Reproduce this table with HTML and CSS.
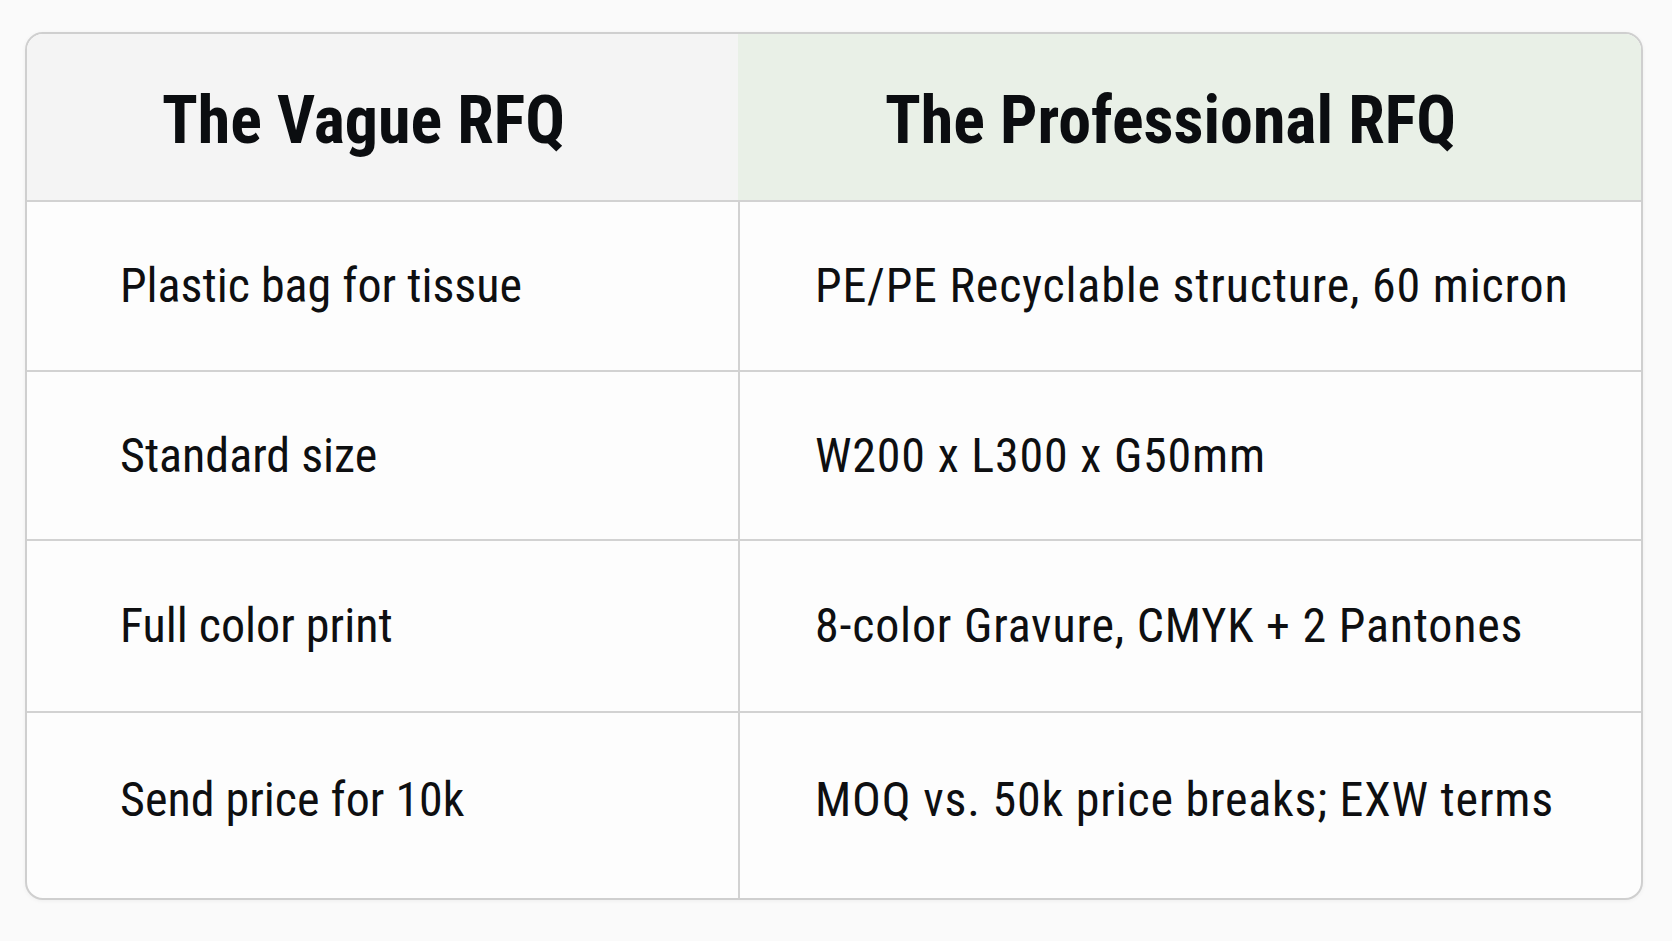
FILE: index.html
```html
<!DOCTYPE html>
<html lang="en">
<head>
<meta charset="utf-8">
<title>RFQ comparison</title>
<link rel="stylesheet" href="styles.css">
</head>
<body>
<div class="table">
  <div class="cell head head-vague">The Vague RFQ</div>
  <div class="cell head head-pro">The Professional RFQ</div>

  <div class="cell vague">Plastic bag for tissue</div>
  <div class="cell pro">PE/PE Recyclable structure, 60 micron</div>

  <div class="cell vague">Standard size</div>
  <div class="cell pro">W200 x L300 x G50mm</div>

  <div class="cell vague">Full color print</div>
  <div class="cell pro">8-color Gravure, CMYK + 2 Pantones</div>

  <div class="cell vague last">Send price for 10k</div>
  <div class="cell pro last">MOQ vs. 50k price breaks; EXW terms</div>
</div>
</body>
</html>
```
FILE: styles.css
```css
* { box-sizing: border-box; }

html, body { height: 100%; }

body {
  margin: 0;
  background: #fafafa;
  font-family: "Roboto Condensed", Roboto, "Liberation Sans", sans-serif;
  color: #0e0f11;
  padding: 32px 29px 41px 25px;
}

.table {
  height: 100%;
  display: grid;
  grid-template-columns: 711px 1fr;
  grid-template-rows: 168px 170px 169px 172px 1fr;
  border: 2px solid #cfcfcf;
  border-radius: 18px;
  overflow: hidden;
  background: #fdfdfd;
  box-shadow: 0 1px 4px rgba(0, 0, 0, 0.05);
}

.cell {
  display: flex;
  align-items: center;
  border-bottom: 2px solid #d2d2d2;
  line-height: 1;
  white-space: nowrap;
}

.cell.last { border-bottom: 0; padding-bottom: 11px; }

.pro { border-left: 2px solid #d2d2d2; }

.head {
  justify-content: center;
  font-size: 66px;
  font-weight: 700;
  padding-right: 38px;
  padding-top: 7px;
  color: #0b0d10;
}

.head-vague { background: #f4f4f4; }
.head-pro { background: #e9f0e7; }

.vague:not(.head),
.pro:not(.head) {
  font-size: 48px;
  font-weight: 400;
}

.vague:not(.head) { padding-left: 93px; }

.pro:not(.head) {
  padding-left: 75px;
  letter-spacing: 0.8px;
}
```
